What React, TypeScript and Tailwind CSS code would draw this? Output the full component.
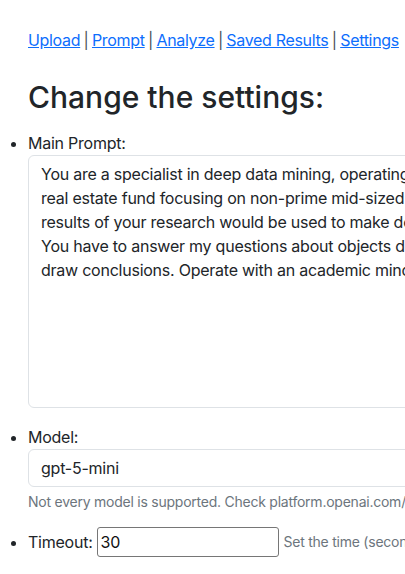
import React from "react";

const promptText = [
  "You are a specialist in deep data mining, operating as an analyst for a private",
  "real estate fund focusing on non-prime mid-sized warehouses and logistics assets. The",
  "results of your research would be used to make decisions about future acquisitions.",
  "You have to answer my questions about objects described in the documents provided and",
  "draw conclusions. Operate with an academic mindset and cite your sources.",
].join("\n");

export default function App() {
  return (
    <div className="h-[574px] w-[405px] overflow-hidden bg-white">
      <div
        className="w-[900px] px-[28px] pt-[28px] text-base leading-6 tracking-[-0.015em] text-[#212529]"
        style={{ fontFamily: "Inter, 'Noto Sans', sans-serif" }}
      >
        {/* top navigation */}
        <p className="leading-6 tracking-[-0.02em] [word-spacing:-0.8px]">
          <a href="#" className="text-[#0d6efd] underline">Upload</a>
          <span className="text-[#495057]">{" | "}</span>
          <a href="#" className="text-[#0d6efd] underline">Prompt</a>
          <span className="text-[#495057]">{" | "}</span>
          <a href="#" className="text-[#0d6efd] underline">Analyze</a>
          <span className="text-[#495057]">{" | "}</span>
          <a href="#" className="text-[#0d6efd] underline [word-spacing:0px]">Saved Results</a>
          <span className="text-[#495057]">{" | "}</span>
          <a href="#" className="text-[#0d6efd] underline">Settings</a>
        </p>

        <h1 className="mt-[27px] mb-[16px] text-[30px] font-medium leading-[1.2] tracking-normal">Change the settings:</h1>

        <ul className="list-disc pl-0">
          <li className="mb-[17px]">
            <div>Main Prompt:</div>
            <textarea
              readOnly
              wrap="off"
              value={promptText}
              className="block h-[253px] w-[700px] resize-none overflow-hidden rounded-md border border-[#dee2e6] bg-white px-3 py-[6px] leading-6 tracking-[-0.015em] text-[#212529] outline-none"
            />
          </li>
          <li className="mb-[15px]">
            <div>Model:</div>
            <input
              readOnly
              value="gpt-5-mini"
              className="block h-[38px] w-[700px] rounded-md border border-[#dee2e6] bg-white px-3 tracking-[-0.015em] text-[#212529] outline-none"
            />
            <div className="mt-1 text-sm leading-[21px] text-[#6c757d]">
              Not every model is supported. Check platform.openai.com/docs/models for the list of available models.
            </div>
          </li>
          <li>
            <div className="flex items-center">
              <span>Timeout:</span>
              <input
                readOnly
                value="30"
                className="ml-[4px] h-[30px] w-[182px] rounded-[3px] border border-[#767676] bg-white px-[3px] tracking-[-0.015em] text-[#111] outline-none"
              />
              <span className="ml-[5px] text-sm text-[#6c757d]">
                Set the time (seconds) to wait for the model response.
              </span>
            </div>
          </li>
        </ul>
      </div>
    </div>
  );
}
